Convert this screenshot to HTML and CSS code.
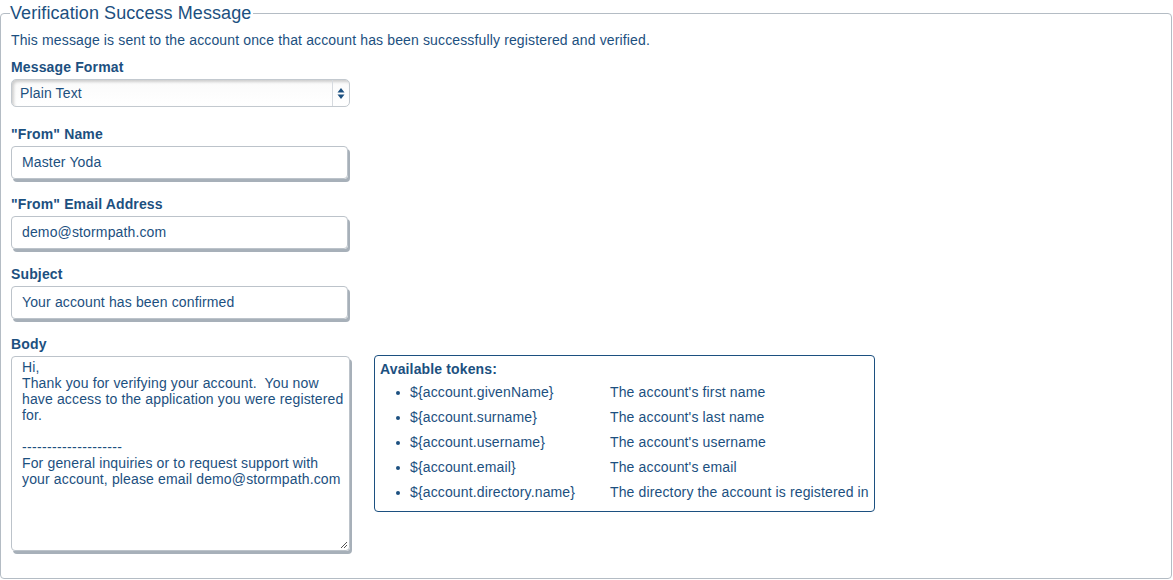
FILE: index.html
```html
<!DOCTYPE html>
<html>
<head>
<meta charset="utf-8">
<link rel="stylesheet" href="styles.css">
</head>
<body>
<fieldset class="panel">
  <legend class="panel-title">Verification Success Message</legend>
  <p class="intro">This message is sent to the account once that account has been successfully registered and verified.</p>

  <div class="field field-format">
    <label class="label">Message Format</label>
    <div class="select">
      <span class="select-value">Plain Text</span>
      <span class="select-arrows">
        <svg width="8" height="13" viewBox="0 0 8 13"><path d="M4 1 L7.5 5.5 L0.5 5.5 Z M4 12 L7.5 7.5 L0.5 7.5 Z" fill="#1c5080"/></svg>
      </span>
    </div>
  </div>

  <div class="field field-first">
    <label class="label">"From" Name</label>
    <div class="input">Master Yoda</div>
  </div>

  <div class="field">
    <label class="label">"From" Email Address</label>
    <div class="input">demo@stormpath.com</div>
  </div>

  <div class="field">
    <label class="label">Subject</label>
    <div class="input">Your account has been confirmed</div>
  </div>

  <div class="field">
    <label class="label">Body</label>
    <div class="body-row">
      <div class="textarea">Hi,
Thank you for verifying your account.  You now have access to the application you were registered for.

<span class="dashes">--------------------</span>
For general inquiries or to request support with your account, please email demo@stormpath.com<svg class="grip" width="8" height="8" viewBox="0 0 8 8"><path d="M7 1 L1 7 M7 4 L4 7" stroke="#555" stroke-width="1"/></svg></div>
      <div class="tokens">
        <div class="tokens-title">Available tokens:</div>
        <ul class="token-list">
          <li><span class="token">${account.givenName}</span><span class="desc">The account's first name</span></li>
          <li><span class="token">${account.surname}</span><span class="desc">The account's last name</span></li>
          <li><span class="token">${account.username}</span><span class="desc">The account's username</span></li>
          <li><span class="token">${account.email}</span><span class="desc">The account's email</span></li>
          <li><span class="token">${account.directory.name}</span><span class="desc">The directory the account is registered in</span></li>
        </ul>
      </div>
    </div>
  </div>
</fieldset>
</body>
</html>
```

FILE: styles.css
```css
html, body {
  margin: 0;
  padding: 0;
  background: #ffffff;
}
body {
  font-family: "Liberation Sans", Arial, sans-serif;
  font-size: 14px;
  letter-spacing: 0.14px;
  color: #1c5080;
}
.panel {
  margin: 3px 0 0 0;
  width: 1172px;
  box-sizing: border-box;
  height: 576px;
  border: 1px solid #b4bcc4;
  border-radius: 4px;
  padding: 0 10px;
}
.panel-title {
  font-size: 18px;
  line-height: 21px;
  padding: 0 2px 0 0;
  margin-left: -1px;
  letter-spacing: 0.08px;
  color: #1c5080;
}
.intro {
  margin: 8px 0 0 0;
  line-height: 16px;
}
.field {
  display: flex;
  flex-direction: column;
  gap: 4px;
  margin-top: 17px;
}
.field-format {
  margin-top: 11px;
}
.field-first {
  margin-top: 19px;
}
.label {
  font-weight: bold;
  line-height: 16px;
  display: block;
}
.select {
  width: 339px;
  height: 28px;
  box-sizing: border-box;
  border: 1px solid #c3c9cf;
  border-radius: 5px;
  background: linear-gradient(#fafafa, #ffffff);
  box-shadow: inset 2px 2px 3px rgba(0,0,0,0.18);
  display: flex;
  align-items: center;
}
.select-value {
  flex: 1;
  padding-left: 8px;
}
.select-arrows {
  width: 16px;
  height: 26px;
  border-left: 1px solid #d6dadf;
  display: flex;
  align-items: center;
  justify-content: center;
}
.input {
  width: 337px;
  height: 33px;
  box-sizing: border-box;
  border: 1px solid #bcc3ca;
  border-radius: 4px;
  box-shadow: 2px 3px 0 #a7b0b9;
  padding: 0 10px;
  line-height: 31px;
  white-space: nowrap;
}
.body-row {
  display: flex;
  align-items: flex-start;
  gap: 24px;
}
.textarea {
  position: relative;
  width: 339px;
  height: 195px;
  box-sizing: border-box;
  border: 1px solid #bcc3ca;
  border-radius: 4px;
  box-shadow: 2px 3px 0 #a7b0b9;
  padding: 2px 2px 0 10px;
  line-height: 16px;
  white-space: pre-wrap;
}
.dashes {
  letter-spacing: 0.35px;
}
.grip {
  position: absolute;
  right: 1px;
  bottom: 1px;
}
.tokens {
  width: 501px;
  box-sizing: border-box;
  border: 1px solid #1c5080;
  border-radius: 4px;
  padding: 5px 5px 6px 5px;
  margin-top: -1px;
}
.tokens-title {
  font-weight: bold;
  line-height: 16px;
}
.token-list {
  margin: 3px 0 0 0;
  padding: 0 0 0 30px;
  list-style: none;
}
.token-list li {
  display: flex;
  line-height: 25px;
  height: 25px;
  position: relative;
}
.token-list li::before {
  content: "";
  position: absolute;
  left: -14px;
  top: 11px;
  width: 4px;
  height: 4px;
  border-radius: 50%;
  background: #1c5080;
}
.token {
  width: 200px;
}
.desc {
  white-space: nowrap;
}
```
